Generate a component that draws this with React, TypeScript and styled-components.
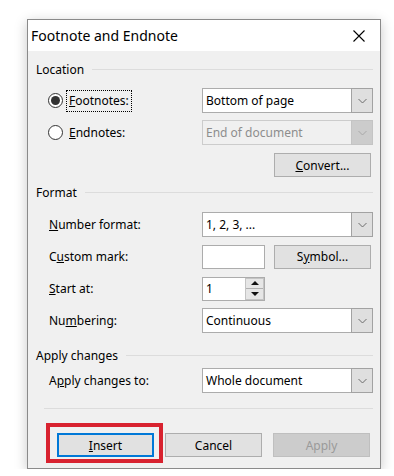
import * as React from 'react'
import styled, { createGlobalStyle, css } from 'styled-components'

const Global = createGlobalStyle`
html, body {
  margin: 0;
  background: #fff;
}
body {
  font-family: "Noto Sans", "Segoe UI", "DejaVu Sans", sans-serif;
  font-size: 12px;
  color: #000;
}
`;

const Dialog = styled.div`
margin: 19px 0 0 27px;
width: 354px;
box-sizing: border-box;
border: 1px solid #8a8a8a;
background: #f0f0f0;
box-shadow: 0 3px 12px rgba(0, 0, 0, 0.22);
`;

const TitleBar = styled.div`
height: 31px;
background: #fff;
display: flex;
align-items: center;
justify-content: space-between;
padding: 0 15px 0 3px;
font-size: 14px;
color: #000;
`;

const Body = styled.div`
padding: 10px 0 11px 0;
display: flex;
flex-direction: column;
`;

const SectionHeader = styled.div<{ $top?: number }>`
height: 16px;
margin-top: ${p => p.$top || 0}px;
padding: 0 7px 0 8px;
display: flex;
align-items: center;
gap: 8px;
color: #000;
&::after {
  content: '';
  flex: 1;
  height: 1px;
  background: #dcdcdc;
}
`;

const Rows = styled.div<{ $top: number }>`
margin-top: ${p => p.$top}px;
display: flex;
flex-direction: column;
gap: 7px;
`;

const Row = styled.div`
height: 25px;
padding-left: 21px;
display: grid;
grid-template-columns: 153px 171px;
align-items: center;
`;

const RadioRow = styled(Row)`
padding-left: 20px;
grid-template-columns: 154px 171px;
`;

const RadioLabel = styled.div`
display: flex;
align-items: center;
gap: 4px;
`;

const RadioDot = styled.span<{ $checked?: boolean }>`
width: 15px;
height: 15px;
box-sizing: border-box;
border-radius: 50%;
border: 1px solid #333;
background: #fff;
display: flex;
align-items: center;
justify-content: center;
&::after {
  content: '';
  width: 9px;
  height: 9px;
  border-radius: 50%;
  background: ${p => (p.$checked ? '#333' : 'transparent')};
}
`;

const FocusText = styled.span<{ $focus?: boolean }>`
padding: 1px 2px 2px 2px;
${p => p.$focus && css`
  outline: 1px dotted #000;
`}
`;

const Select = styled.div<{ $disabled?: boolean }>`
width: 171px;
height: 25px;
box-sizing: border-box;
border: 1px solid ${p => (p.$disabled ? '#cccccc' : '#acacac')};
background: ${p => (p.$disabled ? '#f0f0f0' : '#fff')};
color: ${p => (p.$disabled ? '#8d8d8d' : '#000')};
display: flex;
`;

const SelectValue = styled.div`
flex: 1;
padding-left: 3px;
display: flex;
align-items: center;
`;

const SelectArrow = styled.div<{ $disabled?: boolean }>`
width: 22px;
margin: -1px -1px -1px 0;
box-sizing: border-box;
border: 1px solid ${p => (p.$disabled ? '#c4c4c4' : '#a2a2a2')};
background: ${p => (p.$disabled ? '#cccccc' : '#dfdfdf')};
display: flex;
align-items: center;
justify-content: center;
`;

const Button = styled.button<{ $default?: boolean }>`
width: 97px;
height: 24px;
box-sizing: border-box;
margin: 0;
padding: 0;
font: inherit;
color: #000;
background: #e1e1e1;
border: 1px solid #adadad;
${p => p.$default && css`
  border-color: #0078d7;
  box-shadow: inset 0 0 0 1px #0078d7;
`}
&:disabled {
  background: #cccccc;
  border-color: #bfbfbf;
  color: #9a9a9a;
}
`;

const RightButtonRow = styled.div`
height: 24px;
margin-top: 8px;
padding-right: 9px;
display: flex;
justify-content: flex-end;
`;

const ControlPair = styled.div`
display: flex;
align-items: center;
gap: 9px;
`;

const TextBox = styled.div`
width: 63px;
height: 24px;
box-sizing: border-box;
border: 1px solid #acacac;
background: #fff;
display: flex;
align-items: center;
`;

const SpinValue = styled.div`
flex: 1;
padding-left: 3px;
`;

const SpinButtons = styled.div`
width: 19px;
height: 22px;
box-sizing: border-box;
border: 1px solid #c4c4c4;
background: #e6e6e6;
display: flex;
flex-direction: column;
`;

const SpinHalf = styled.div<{ $up?: boolean }>`
flex: 1;
display: flex;
align-items: center;
justify-content: center;
${p => p.$up && css`
  border-bottom: 1px solid #b0b0b0;
`}
&::after {
  content: '';
  width: 0;
  height: 0;
  border-left: 4px solid transparent;
  border-right: 4px solid transparent;
  ${p => (p.$up
    ? css`border-bottom: 4px solid #111;`
    : css`border-top: 4px solid #111;`)}
}
`;

const Separator = styled.div`
height: 1px;
margin: 15px 7px 0 16px;
background: #dcdcdc;
`;

const ButtonBar = styled.div`
margin-top: 24px;
padding-left: 29px;
display: flex;
gap: 11px;
`;

const Highlight = styled.div`
position: relative;
display: flex;
&::after {
  content: '';
  position: absolute;
  left: -11px;
  top: -10px;
  right: -9px;
  bottom: -6px;
  border: 4px solid #d8222f;
  pointer-events: none;
}
`;

const Chevron = ({ disabled }: { disabled?: boolean }) => (
  <svg width="9" height="6" viewBox="0 0 9 6">
    <path d="M0.5 1 L4.5 5 L8.5 1" fill="none" stroke={disabled ? '#a8a8a8' : '#6d6d6d'} strokeWidth="1" />
  </svg>
)

const CloseIcon = () => (
  <svg width="12" height="12" viewBox="0 0 12 12">
    <path d="M0.5 0.5 L11.5 11.5 M11.5 0.5 L0.5 11.5" stroke="#000" strokeWidth="1.1" />
  </svg>
)

const Dropdown = ({ value, disabled }: { value: string, disabled?: boolean }) => (
  <Select $disabled={disabled}>
    <SelectValue>{value}</SelectValue>
    <SelectArrow $disabled={disabled}><Chevron disabled={disabled} /></SelectArrow>
  </Select>
)

export default function App() {
  return (
    <>
      <Global />
      <Dialog>
        <TitleBar>
          <span>Footnote and Endnote</span>
          <CloseIcon />
        </TitleBar>
        <Body>
          <SectionHeader>Location</SectionHeader>
          <Rows $top={11}>
            <RadioRow>
              <RadioLabel>
                <RadioDot $checked />
                <FocusText $focus><u>F</u>ootnotes:</FocusText>
              </RadioLabel>
              <Dropdown value="Bottom of page" />
            </RadioRow>
            <RadioRow>
              <RadioLabel>
                <RadioDot />
                <FocusText><u>E</u>ndnotes:</FocusText>
              </RadioLabel>
              <Dropdown value="End of document" disabled />
            </RadioRow>
          </Rows>
          <RightButtonRow>
            <Button><u>C</u>onvert...</Button>
          </RightButtonRow>

          <SectionHeader $top={7}>Format</SectionHeader>
          <Rows $top={12}>
            <Row>
              <span><u>N</u>umber format:</span>
              <Dropdown value="1, 2, 3, ..." />
            </Row>
            <Row>
              <span>C<u>u</u>stom mark:</span>
              <ControlPair>
                <TextBox />
                <Button>S<u>y</u>mbol...</Button>
              </ControlPair>
            </Row>
            <Row>
              <span><u>S</u>tart at:</span>
              <TextBox>
                <SpinValue>1</SpinValue>
                <SpinButtons>
                  <SpinHalf $up />
                  <SpinHalf />
                </SpinButtons>
              </TextBox>
            </Row>
            <Row>
              <span>Nu<u>m</u>bering:</span>
              <Dropdown value="Continuous" />
            </Row>
          </Rows>

          <SectionHeader $top={14}>Apply changes</SectionHeader>
          <Rows $top={5}>
            <Row>
              <span>A<u>p</u>ply changes to:</span>
              <Dropdown value="Whole document" />
            </Row>
          </Rows>

          <Separator />

          <ButtonBar>
            <Highlight>
              <Button $default><u>I</u>nsert</Button>
            </Highlight>
            <Button>Cancel</Button>
            <Button disabled>Apply</Button>
          </ButtonBar>
        </Body>
      </Dialog>
    </>
  )
}
